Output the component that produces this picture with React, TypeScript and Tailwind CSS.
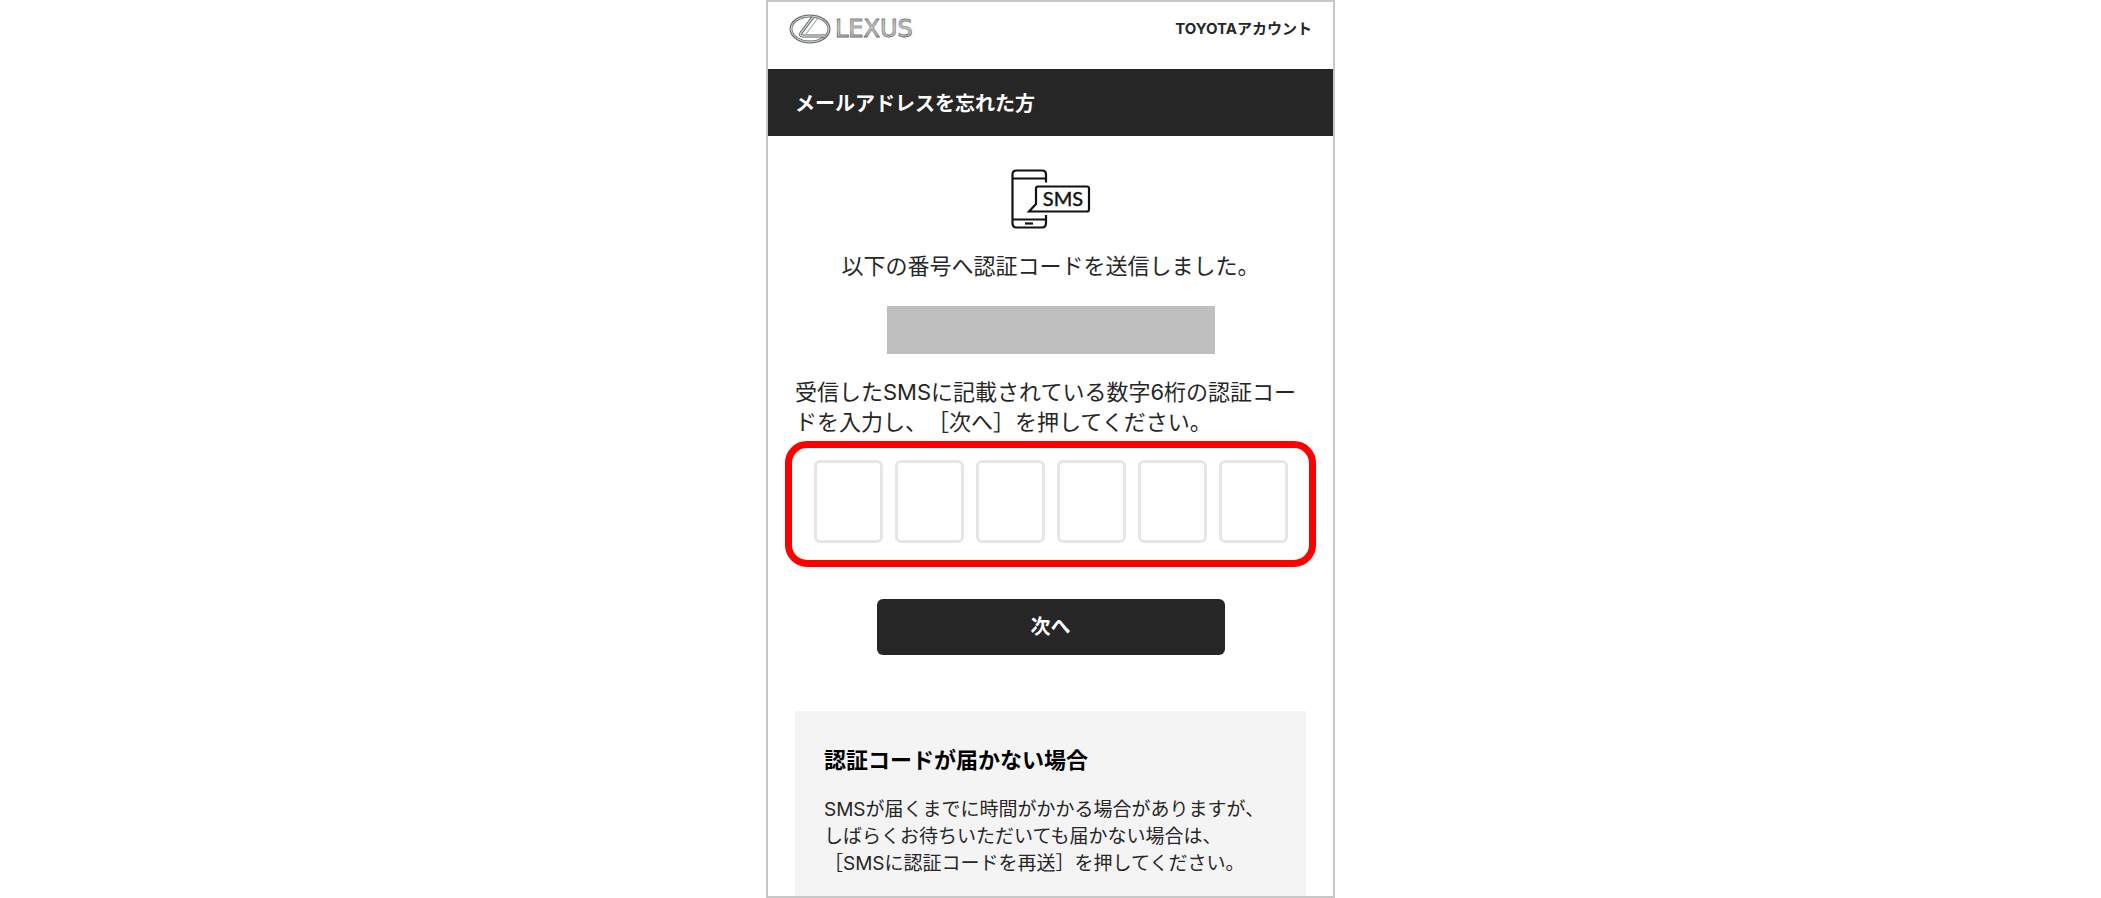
import { useState } from 'react';

const CODE_LENGTH = 6;

const LexusLogo = () => (
  <svg width="164" height="30" viewBox="0 0 164 30" role="img" aria-label="LEXUS">
    <defs>
      <linearGradient id="chrome" x1="0" y1="0" x2="0" y2="1">
        <stop offset="0" stopColor="#6f7372" />
        <stop offset="0.5" stopColor="#9da1a0" />
        <stop offset="1" stopColor="#3f4242" />
      </linearGradient>
    </defs>
    <g fill="none" strokeLinejoin="round">
      <ellipse cx="21" cy="15" rx="19" ry="13" stroke="#6d7170" strokeWidth="3" />
      <ellipse cx="21" cy="15" rx="19" ry="13" stroke="#d3d7d5" strokeWidth="1" />
      <path d="M24 3 L12 19 Q10 22 14 22 L36 22" stroke="#555958" strokeWidth="3" />
      <path d="M24 3 L12 19 Q10 22 14 22 L36 22" stroke="#ccd0ce" strokeWidth="1.4" />
      <path d="M29 4 L17 20" stroke="#8d9190" strokeWidth="1" />
    </g>
    <text
      x="46"
      y="23"
      fontSize="24"
      fontFamily="DejaVu Sans, sans-serif"
      fill="#c4c8c6"
      stroke="url(#chrome)"
      strokeWidth="1"
    >
      LEXUS
    </text>
  </svg>
);

const SmsIcon = () => (
  <svg width="80" height="60" viewBox="0 0 80 60" fill="none" stroke="#111" strokeWidth="2.2" aria-hidden="true">
    <path d="M35 13.5 V5.5 Q35 1.5 31 1.5 H5.5 Q1.5 1.5 1.5 5.5 V54 Q1.5 58.5 5.5 58.5 H31 Q35 58.5 35 54 V46" />
    <path d="M1.5 9.5 H35 M1.5 50.5 H35" />
    <path d="M14 54.5 H22" />
    <path d="M18 42.5 L25 35 V19.5 Q25 17.5 27 17.5 H76 Q78 17.5 78 19.5 V40.5 Q78 42.5 76 42.5 Z" />
    <text
      x="52"
      y="37"
      textAnchor="middle"
      fontSize="20"
      fontFamily="Lato, sans-serif"
      fill="#111"
      strokeWidth="0.4"
    >
      SMS
    </text>
  </svg>
);

const Header = () => (
  <header className="flex h-[67px] items-start justify-between px-[21px] pt-3">
    <a href="#" aria-label="LEXUS">
      <LexusLogo />
    </a>
    <a href="#" className="text-[15px] leading-[30px] font-bold">
      TOYOTAアカウント
    </a>
  </header>
);

const CodeInputs = () => {
  const [code, setCode] = useState<string[]>(Array(CODE_LENGTH).fill(''));

  const update = (index: number, value: string) => {
    setCode(code.map((digit, i) => (i === index ? value : digit)));
  };

  return (
    <div className="mx-[17px] mt-1 flex justify-center gap-3 rounded-[22px] border-7 border-[#ff0000] pt-3 pb-[17px]">
      {code.map((digit, i) => (
        <input
          key={i}
          type="text"
          inputMode="numeric"
          maxLength={1}
          aria-label={`認証コード ${i + 1}桁目`}
          value={digit}
          onChange={(e) => update(i, e.target.value)}
          className="h-[83px] w-[69px] min-w-0 rounded-md border-3 border-[#e6e6e6] text-center text-[22px]"
        />
      ))}
    </div>
  );
};

function App() {
  return (
    <div
      lang="ja"
      className="min-h-screen bg-white font-['Inter','Noto_Sans_CJK_JP',sans-serif] text-[#262626] [text-spacing-trim:space-all]"
    >
      <div className="mx-auto flex min-h-screen max-w-[569px] flex-col border-2 border-[#c8c8c8]">
        <Header />

        <h1 className="bg-[#262626] px-[27px] pt-5 pb-4 text-[20px] leading-[31px] font-bold text-white">
          メールアドレスを忘れた方
        </h1>

        <main className="flex grow flex-col">
          <div className="flex flex-col items-center pt-[33px]">
            <SmsIcon />
            <p className="mt-[21px] text-[22px] leading-[32px]">以下の番号へ認証コードを送信しました。</p>
            <div className="mt-6 h-12 w-[328px] max-w-full bg-[#bfbfbf]" />
          </div>

          <p className="mt-[23px] px-[27px] text-[22px] leading-[30px]">
            受信したSMSに記載されている数字6桁の認証コードを入力し、［次へ］を押してください。
          </p>

          <CodeInputs />

          <button
            type="button"
            className="mx-auto mt-8 h-14 w-[348px] max-w-full rounded-md bg-[#262626] text-[20px] font-bold text-white"
          >
            次へ
          </button>

          <section className="mx-[27px] mt-14 grow bg-[#f4f4f4] px-[29px] pt-[34px]">
            <h2 className="text-[22px] leading-[30px] font-bold text-black">認証コードが届かない場合</h2>
            <p className="mt-[21px] text-[19px] leading-[27px]">
              SMSが届くまでに時間がかかる場合がありますが、
              <br />
              しばらくお待ちいただいても届かない場合は、
              <br />
              ［SMSに認証コードを再送］を押してください。
            </p>
          </section>
        </main>
      </div>
    </div>
  );
}

export default App;
